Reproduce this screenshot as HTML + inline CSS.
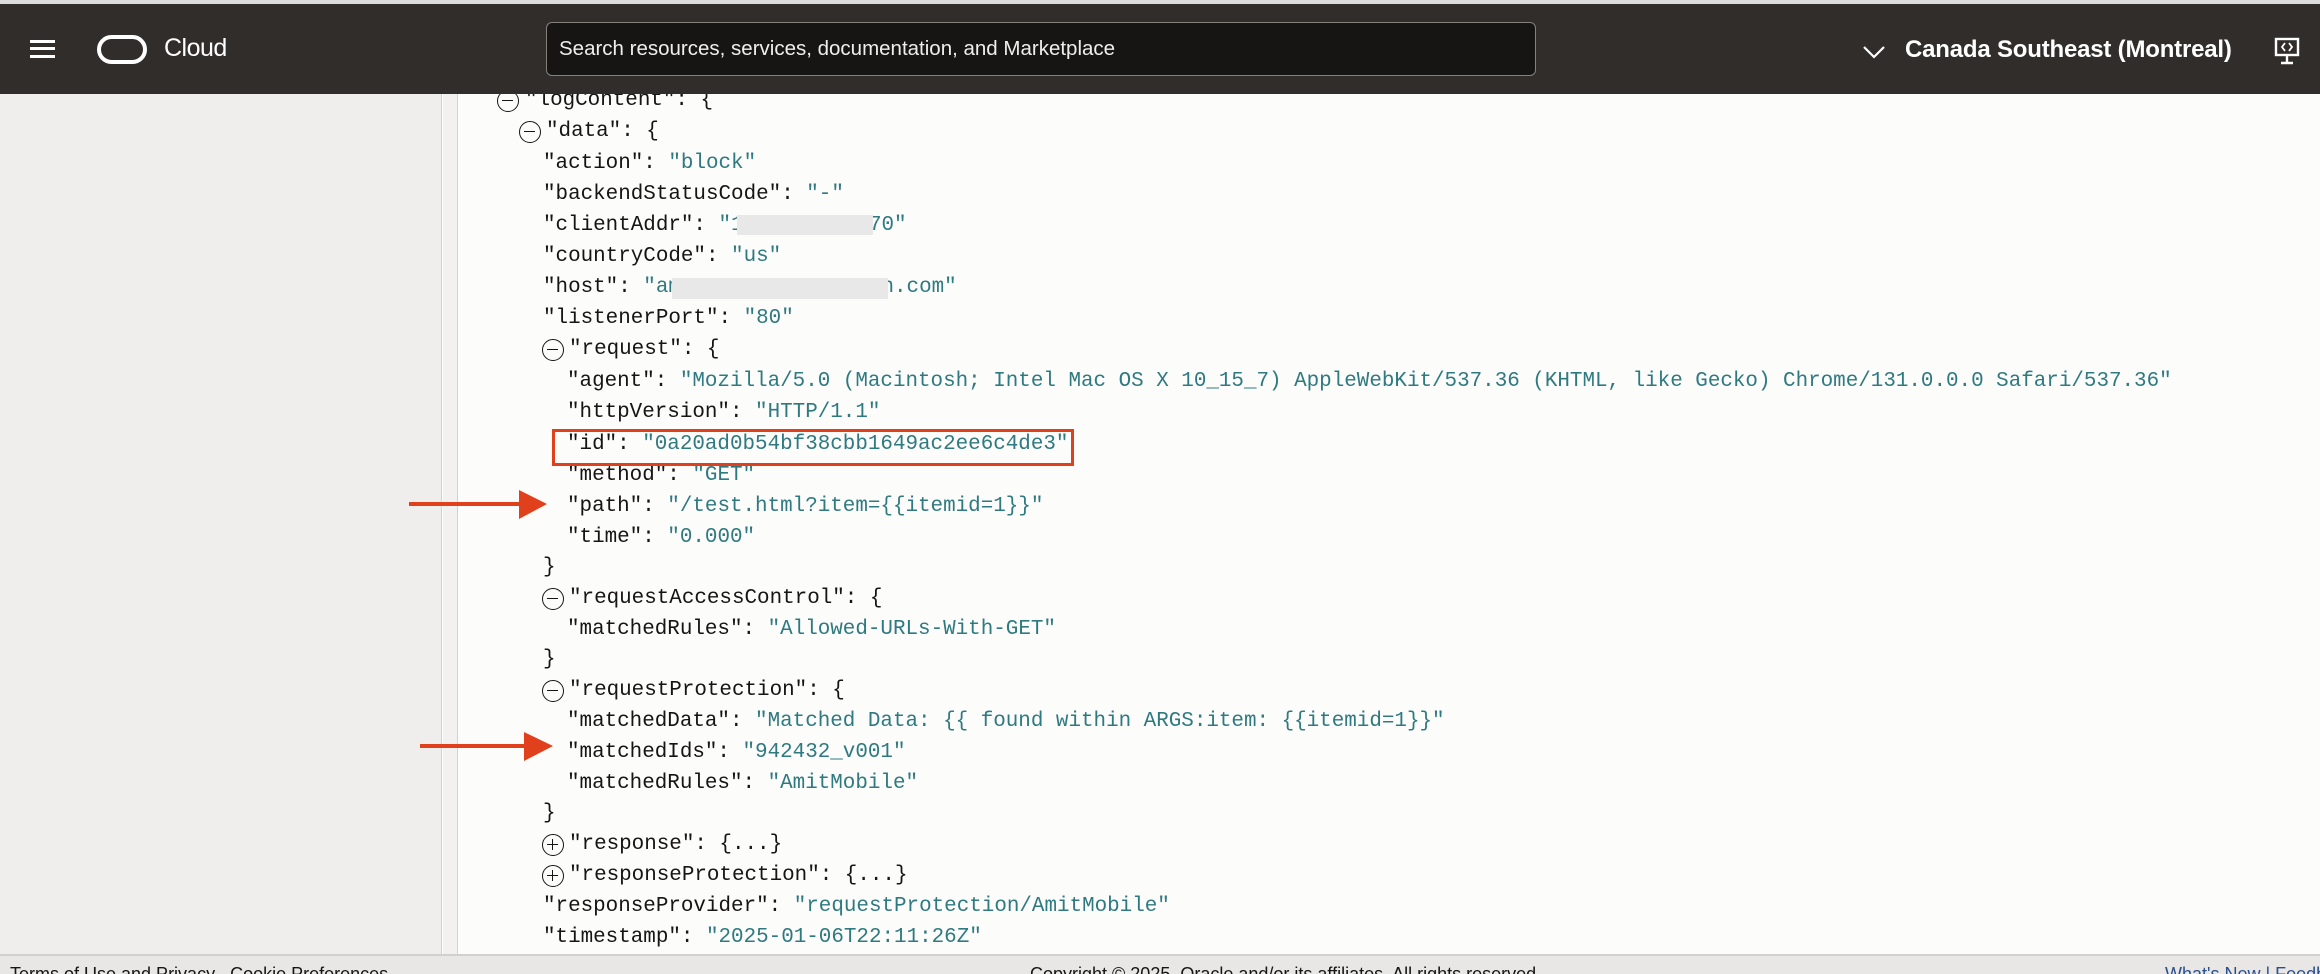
<!DOCTYPE html>
<html><head><meta charset="utf-8"><style>
*{margin:0;padding:0;box-sizing:border-box}
html,body{width:2320px;height:974px;overflow:hidden;background:#fcfcfb}
body{position:relative;font-family:"Liberation Sans",sans-serif}
#top{position:absolute;left:0;top:0;width:2320px;height:4px;background:#dcdcdc;z-index:6}
#hdr{position:absolute;left:0;top:4px;width:2320px;height:90px;background:#312d2a;z-index:5}
#side{position:absolute;left:0;top:94px;width:442px;height:860px;background:#efeeec;border-right:1px solid #d4d2cf}
#strip{position:absolute;left:443px;top:94px;width:15px;height:860px;background:#f2f1ef;border-right:1px solid #d4d2cf}
#foot{position:absolute;left:0;top:954px;width:2320px;height:20px;background:#e8e7e5;border-top:2px solid #d2d0cd;overflow:hidden;font-size:18px;color:#161513}
.ln{position:absolute;height:31px;line-height:31px;font-family:"Liberation Mono",monospace;font-size:20.9px;color:#161513;white-space:pre}
.v{color:#2f7a80}
.c{position:absolute;width:22px;height:22px;border:1.6px solid #161513;border-radius:50%;}
.c:after{content:"";position:absolute;left:4px;top:8.6px;width:11px;height:1.6px;background:#161513}
.p:before{content:"";position:absolute;left:8.6px;top:4px;width:1.6px;height:11px;background:#161513}
.red{position:absolute;border:3.5px solid #e1401d}
.mask{position:absolute;background:#e8e8e8}
</style></head><body>
<div id="top"></div>
<div id="hdr">
 <div style="position:absolute;left:30px;top:36px;width:25px;height:3px;background:#fff"></div>
 <div style="position:absolute;left:30px;top:43px;width:25px;height:3px;background:#fff"></div>
 <div style="position:absolute;left:30px;top:51px;width:25px;height:3px;background:#fff"></div>
 <div style="position:absolute;left:97px;top:31px;width:50px;height:29px;border:4.5px solid #fff;border-radius:15px"></div>
 <div style="position:absolute;left:164px;top:29px;color:#fff;font-size:25px;line-height:30px;letter-spacing:-0.5px">Cloud</div>
 <div style="position:absolute;left:546px;top:18px;width:990px;height:54px;background:#161513;border:1.5px solid #85817c;border-radius:6px;color:#f0eeec;font-size:20.5px;line-height:51px;padding-left:12px">Search resources, services, documentation, and Marketplace</div>
 <svg style="position:absolute;left:1862px;top:40px" width="24" height="16" viewBox="0 0 24 16"><path d="M2 3 L12 13 L22 3" stroke="#fff" stroke-width="2.2" fill="none"/></svg>
 <div style="position:absolute;left:1905px;top:30px;color:#fff;font-size:24px;line-height:32px;font-weight:bold;letter-spacing:-0.2px">Canada Southeast (Montreal)</div>
 <svg style="position:absolute;left:2274px;top:33px" width="28" height="30" viewBox="0 0 28 30"><rect x="2" y="2" width="22" height="16" stroke="#fff" stroke-width="2.4" fill="none"/><path d="M11 6 L8 10 L11 14 M15 6 L18 10 L15 14" stroke="#fff" stroke-width="1.8" fill="none"/><path d="M13 18 V25 M7 26 H19" stroke="#fff" stroke-width="2.4"/></svg>
</div>
<div id="side"></div>
<div id="strip"></div>

<div class="c" style="left:497px;top:90px"></div><div class="ln" style="left:525px;top:85px">"logContent": {</div>
<div class="c" style="left:519px;top:121px"></div><div class="ln" style="left:546px;top:116px">"data": {</div>
<div class="ln" style="left:543px;top:148px">"action": <span class="v">"block"</span></div>
<div class="ln" style="left:543px;top:179px">"backendStatusCode": <span class="v">"-"</span></div>
<div class="ln" style="left:543px;top:210px">"clientAddr": <span class="v">"1          70"</span></div>
<div class="ln" style="left:543px;top:241px">"countryCode": <span class="v">"us"</span></div>
<div class="ln" style="left:543px;top:272px">"host": <span class="v">"am                n.com"</span></div>
<div class="ln" style="left:543px;top:303px">"listenerPort": <span class="v">"80"</span></div>
<div class="mask" style="left:737px;top:215px;width:136px;height:20px"></div>
<div class="mask" style="left:672px;top:278px;width:216px;height:21px"></div>
<div class="c" style="left:542px;top:339px"></div><div class="ln" style="left:569px;top:334px">"request": {</div>
<div class="ln" style="left:567px;top:366px">"agent": <span class="v">"Mozilla/5.0 (Macintosh; Intel Mac OS X 10_15_7) AppleWebKit/537.36 (KHTML, like Gecko) Chrome/131.0.0.0 Safari/537.36"</span></div>
<div class="ln" style="left:567px;top:397px">"httpVersion": <span class="v">"HTTP/1.1"</span></div>
<div class="ln" style="left:567px;top:429px">"id": <span class="v">"0a20ad0b54bf38cbb1649ac2ee6c4de3"</span></div>
<div class="ln" style="left:567px;top:460px">"method": <span class="v">"GET"</span></div>
<div class="ln" style="left:567px;top:491px">"path": <span class="v">"/test.html?item={{itemid=1}}"</span></div>
<div class="ln" style="left:567px;top:522px">"time": <span class="v">"0.000"</span></div>
<div class="ln" style="left:543px;top:552px">}</div>
<div class="c" style="left:542px;top:588px"></div><div class="ln" style="left:569px;top:583px">"requestAccessControl": {</div>
<div class="ln" style="left:567px;top:614px">"matchedRules": <span class="v">"Allowed-URLs-With-GET"</span></div>
<div class="ln" style="left:543px;top:644px">}</div>
<div class="c" style="left:542px;top:680px"></div><div class="ln" style="left:569px;top:675px">"requestProtection": {</div>
<div class="ln" style="left:567px;top:706px">"matchedData": <span class="v">"Matched Data: {{ found within ARGS:item: {{itemid=1}}"</span></div>
<div class="ln" style="left:567px;top:737px">"matchedIds": <span class="v">"942432_v001"</span></div>
<div class="ln" style="left:567px;top:768px">"matchedRules": <span class="v">"AmitMobile"</span></div>
<div class="ln" style="left:543px;top:798px">}</div>
<div class="c p" style="left:542px;top:834px"></div><div class="ln" style="left:569px;top:829px">"response": {...}</div>
<div class="c p" style="left:542px;top:865px"></div><div class="ln" style="left:569px;top:860px">"responseProtection": {...}</div>
<div class="ln" style="left:543px;top:891px">"responseProvider": <span class="v">"requestProtection/AmitMobile"</span></div>
<div class="ln" style="left:543px;top:922px">"timestamp": <span class="v">"2025-01-06T22:11:26Z"</span></div>

<div class="red" style="left:552px;top:429px;width:522px;height:37px"></div>
<svg style="position:absolute;left:405px;top:487px" width="150" height="36" viewBox="0 0 150 36"><path d="M4 17 H120" stroke="#e1401d" stroke-width="4"/><path d="M114 3 L142 17 L114 32 Z" fill="#e1401d"/></svg>
<svg style="position:absolute;left:418px;top:729px" width="150" height="36" viewBox="0 0 150 36"><path d="M2 17 H112" stroke="#e1401d" stroke-width="4"/><path d="M106 3 L135 17 L106 32 Z" fill="#e1401d"/></svg>

<div id="foot">
 <div style="position:absolute;left:10px;top:8px;white-space:nowrap">Terms of Use and Privacy &nbsp; Cookie Preferences</div>
 <div style="position:absolute;left:1030px;top:8px;white-space:nowrap">Copyright © 2025, Oracle and/or its affiliates. All rights reserved.</div>
 <div style="position:absolute;left:2165px;top:8px;white-space:nowrap;color:#2b4f8a">What's New | Feedback</div>
</div>
</body></html>
